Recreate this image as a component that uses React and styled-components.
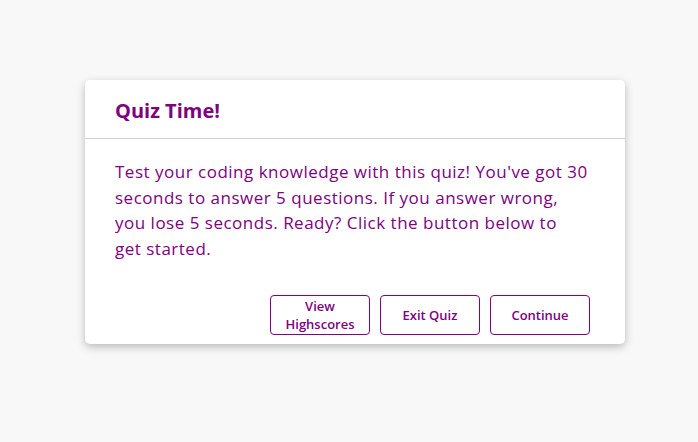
import styled, { createGlobalStyle } from "styled-components";

const GlobalStyle = createGlobalStyle`
  html, body {
    margin: 0;
    background: #f8f8f8;
    font-family: "Open Sans", "Noto Sans", sans-serif;
  }
`;

const Page = styled.div`
  padding: 80px 0 0 85px;
  min-height: 362px;
`;

const Card = styled.section`
  width: 540px;
  height: 264px;
  background: #fff;
  border-radius: 5px;
  box-shadow: 0 3px 8px rgba(0, 0, 0, 0.25);
  display: flex;
  flex-direction: column;
  color: #800080;
`;

const Header = styled.header`
  height: 58px;
  padding: 0 30px;
  display: flex;
  align-items: center;
  border-bottom: 1px solid #d2d2d2;
`;

const Title = styled.h2`
  margin: 0;
  font-size: 20px;
  font-weight: 700;
  padding-top: 2px;
`;

const Body = styled.div`
  flex: 1;
  padding: 20px 35px 9px 30px;
  display: flex;
  flex-direction: column;
`;

const Text = styled.p`
  margin: 0;
  max-width: 473px;
  font-size: 17px;
  line-height: 25.5px;
  letter-spacing: 0.5px;
  flex: 1;
`;

const Actions = styled.div`
  display: flex;
  justify-content: flex-end;
  gap: 10px;
`;

const Button = styled.button`
  width: 100px;
  height: 40px;
  padding: 0 6px;
  background: #fff;
  border: 1px solid #800080;
  border-radius: 4px;
  color: #800080;
  font-family: inherit;
  font-size: 13px;
  font-weight: 600;
  line-height: 18px;
  cursor: pointer;
`;

export default function App() {
  return (
    <>
      <GlobalStyle />
      <Page>
        <Card>
          <Header>
            <Title>Quiz Time!</Title>
          </Header>
          <Body>
            <Text>
              Test your coding knowledge with this quiz! You've got 30 seconds
              to answer 5 questions. If you answer wrong, you lose 5 seconds.
              Ready? Click the button below to get started.
            </Text>
            <Actions>
              <Button>View Highscores</Button>
              <Button>Exit Quiz</Button>
              <Button>Continue</Button>
            </Actions>
          </Body>
        </Card>
      </Page>
    </>
  );
}
